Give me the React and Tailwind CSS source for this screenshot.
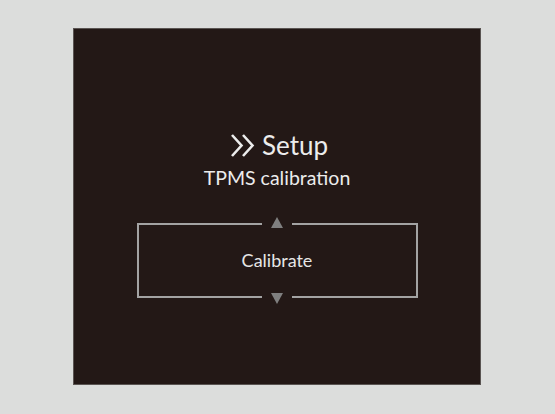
import React from 'react';

function Arrow({ down }) {
  return (
    <div className={`absolute left-1/2 -translate-x-1/2 w-[30px] h-[14px] bg-[#231816] flex justify-center ${down ? 'bottom-[-8px] items-end' : 'top-[-8px] items-start'}`}>
      <svg width="12" height="11" viewBox="0 0 12 11">
        {down ? <polygon points="0,0 12,0 6,11" fill="#7f7f7f" /> : <polygon points="6,0 12,11 0,11" fill="#7f7f7f" />}
      </svg>
    </div>
  );
}

export default function App() {
  return (
    <div className="w-[555px] h-[414px] bg-[#dcdddc] pt-[28px] pl-[73px]" style={{ fontFamily: 'Lato, "Open Sans", sans-serif' }}>
      <div className="w-[408px] h-[357px] bg-[#231816] border border-[#5a5452] flex flex-col items-center pt-[101px]">
        <div className="flex items-center gap-[6px] text-[#ececec] h-[30px] ml-[4px]">
          <svg width="26" height="23" viewBox="0 0 26 23" fill="none" stroke="#ececec" strokeWidth="2.6">
            <polyline points="2,1 11.5,11.5 2,22" />
            <polyline points="13,1 22.5,11.5 13,22" />
          </svg>
          <span className="text-[26px] leading-[30px]">Setup</span>
        </div>
        <div className="text-[#ececec] text-[19.5px] leading-[24px] mt-[6px]">TPMS calibration</div>
        <div className="relative mt-[33px] w-[281px] h-[75px] border-2 border-[#a3a3a3] flex items-center justify-center">
          <Arrow />
          <span className="text-[#e6e6e6] text-[18px]">Calibrate</span>
          <Arrow down />
        </div>
      </div>
    </div>
  );
}
